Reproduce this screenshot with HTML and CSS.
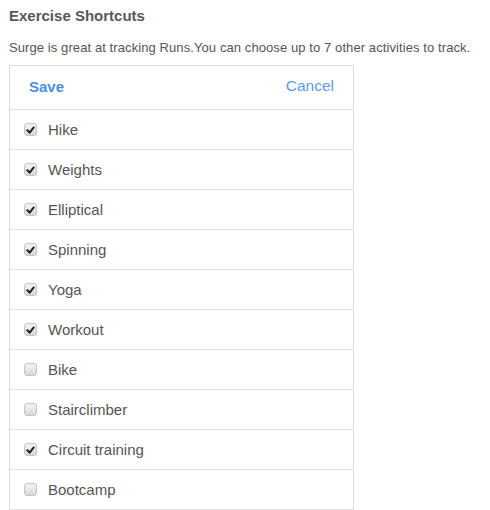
FILE: index.html
```html
<!DOCTYPE html>
<html>
<head>
<meta charset="utf-8">
<link rel="stylesheet" href="styles.css">
</head>
<body>
<h1 class="title">Exercise Shortcuts</h1>
<p class="desc">Surge is great at tracking Runs.You can choose up to 7 other activities to track.</p>
<div class="panel">
  <div class="head">
    <span class="save">Save</span>
    <span class="cancel">Cancel</span>
  </div>
  <div class="row"><span class="cb on"></span><span class="label">Hike</span></div>
  <div class="row"><span class="cb on"></span><span class="label">Weights</span></div>
  <div class="row"><span class="cb on"></span><span class="label">Elliptical</span></div>
  <div class="row"><span class="cb on"></span><span class="label">Spinning</span></div>
  <div class="row"><span class="cb on"></span><span class="label">Yoga</span></div>
  <div class="row"><span class="cb on"></span><span class="label">Workout</span></div>
  <div class="row"><span class="cb"></span><span class="label">Bike</span></div>
  <div class="row"><span class="cb"></span><span class="label">Stairclimber</span></div>
  <div class="row"><span class="cb on"></span><span class="label">Circuit training</span></div>
  <div class="row"><span class="cb"></span><span class="label">Bootcamp</span></div>
</div>
</body>
</html>
```
FILE: styles.css
```css
html, body { margin: 0; padding: 0; background: #fff; }
body {
  font-family: "Liberation Sans", Arial, sans-serif;
  color: #555;
  padding: 0 9px;
}
.title {
  font-size: 15px;
  font-weight: bold;
  color: #585858;
  margin: 0;
  padding-top: 7px;
  line-height: 18px;
}
.desc {
  font-size: 13px;
  letter-spacing: 0.09px;
  margin: 0;
  padding-top: 15px;
  line-height: 16px;
  color: #555;
  white-space: nowrap;
}
.panel {
  margin-top: 9px;
  width: 343px;
  border: 1px solid #ddd;
  border-bottom: none;
}
.head {
  height: 40px;
  padding: 0 19px 3px 19px;
  border-bottom: 1px solid #ddd;
  display: flex;
  align-items: center;
  justify-content: space-between;
  font-size: 15px;
}
.save { color: #4a90e2; font-weight: bold; }
.cancel { color: #5b9be8; font-size: 15.5px; margin-bottom: 1px; }
.row {
  height: 39px;
  border-bottom: 1px solid #e2e2e2;
  display: flex;
  align-items: center;
  padding-left: 14px;
  font-size: 15px;
}
.label { color: #555; margin-left: 11px; }
.cb {
  width: 11px;
  height: 11px;
  border: 1px solid #c4c4c4;
  border-radius: 3px;
  background: linear-gradient(#f2f2f2, #d8d8d8);
  position: relative;
  flex: none;
}
.cb.on::after {
  content: "";
  position: absolute;
  left: 3px;
  top: 1px;
  width: 3px;
  height: 6px;
  border: solid #222;
  border-width: 0 2px 2px 0;
  transform: rotate(40deg);
}
```
